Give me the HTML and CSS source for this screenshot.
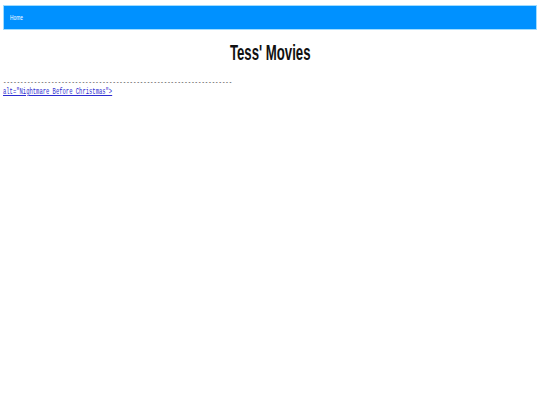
FILE: index.html
```html
<!DOCTYPE html>
<html>
<head>
<meta charset="utf-8">
<link rel="stylesheet" href="styles.css">
</head>
<body>
<div class="page">
  <nav class="nav"><a class="nav-link" href="#"><span class="narrow">Home</span></a></nav>
  <h1 class="title"><span class="narrow-c">Tess' Movies</span></h1>
  <div class="dashes"><span class="dash-text">-------------------------------------------------------------------</span></div>
  <a class="alt-link" href="#"><span class="narrow">alt="Nightmare Before Christmas"&gt;</span></a>
</div>
</body>
</html>
```
FILE: styles.css
```css
html, body {
  margin: 0;
  padding: 0;
  background: #ffffff;
}
.page {
  padding: 5px 3px 0 3px;
  font-family: "Liberation Sans", Arial, sans-serif;
}
.narrow {
  display: inline-block;
  transform: scaleX(0.6);
  transform-origin: 0 50%;
}
.narrow-c {
  display: inline-block;
  transform: scaleX(0.6);
  transform-origin: 50% 50%;
}
.nav {
  height: 25px;
  box-sizing: border-box;
  background: #0091ff;
  border: 1px solid #9fdcff;
  display: flex;
  align-items: center;
  padding-left: 6px;
}
.nav-link {
  color: #ffffff;
  font-size: 8px;
  text-decoration: none;
}
.title {
  margin: 11px 0 0 0;
  text-align: center;
  font-size: 22px;
  line-height: 24px;
  font-weight: bold;
  color: #111111;
}
.dashes {
  margin-top: 14px;
  height: 6px;
  font-family: "Liberation Mono", monospace;
  font-size: 8px;
  line-height: 6px;
  color: #333333;
  white-space: nowrap;
}
.dash-text {
  display: inline-block;
  transform: scaleX(0.7125);
  transform-origin: 0 50%;
}
.alt-link {
  display: block;
  margin-top: 2px;
  font-family: "Liberation Mono", monospace;
  font-size: 9.2px;
  line-height: 10px;
  color: #2b2bd0;
  white-space: nowrap;
}
.alt-link .narrow {
  text-decoration: underline;
}
```
